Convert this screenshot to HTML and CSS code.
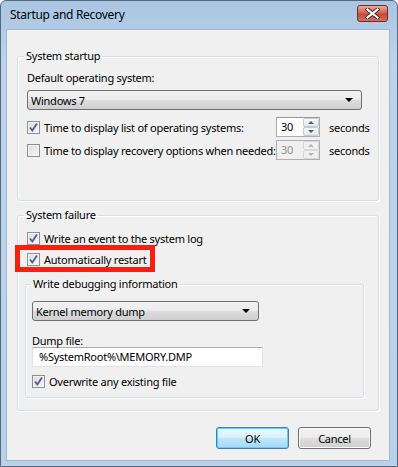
FILE: index.html
```
<!DOCTYPE html>
<html lang="en">
<head>
    <meta charset="UTF-8">
    <title>Startup and Recovery</title>
    <link rel="stylesheet" href="styles.css">
</head>
<body>
    <div class="window">
        <div class="titlebar">
            <span class="title">Startup and Recovery</span>
            <span class="close">
                <svg width="15" height="11" viewBox="0 0 15 11">
                    <path d="M2.5 1.5 L12.5 9.5 M12.5 1.5 L2.5 9.5" stroke="#4a2320" stroke-width="4" stroke-linecap="square"/>
                    <path d="M2.5 1.5 L12.5 9.5 M12.5 1.5 L2.5 9.5" stroke="#fff" stroke-width="2.2" stroke-linecap="square"/>
                </svg>
            </span>
        </div>
        <div class="content">
            <fieldset class="group startup">
                <legend>System startup</legend>
                <div class="text-line">Default operating system:</div>
                <div class="combo wide">
                    <span>Windows 7</span>
                    <span class="arrow"></span>
                </div>
                <div class="row first">
                    <div class="check-label">
                        <span class="check on"><svg width="11" height="11" viewBox="0 0 11 11"><path d="M2 5.5 L4.3 8.5 L9 1.5" fill="none" stroke="#4a5f97" stroke-width="1.8"/></svg></span>
                        <span>Time to display list of operating systems:</span>
                    </div>
                    <div class="spin">
                        <span class="spin-value">30</span>
                        <span class="spin-btns">
                            <span class="spin-btn"><span class="up"></span></span>
                            <span class="spin-btn"><span class="down"></span></span>
                        </span>
                    </div>
                    <span class="unit">seconds</span>
                </div>
                <div class="row second">
                    <div class="check-label">
                        <span class="check"></span>
                        <span>Time to display recovery options when needed:</span>
                    </div>
                    <div class="spin disabled">
                        <span class="spin-value">30</span>
                        <span class="spin-btns">
                            <span class="spin-btn"><span class="up"></span></span>
                            <span class="spin-btn"><span class="down"></span></span>
                        </span>
                    </div>
                    <span class="unit">seconds</span>
                </div>
            </fieldset>

            <fieldset class="group failure">
                <legend>System failure</legend>
                <div class="row log">
                    <span class="check on"><svg width="11" height="11" viewBox="0 0 11 11"><path d="M2 5.5 L4.3 8.5 L9 1.5" fill="none" stroke="#4a5f97" stroke-width="1.8"/></svg></span>
                    <span>Write an event to the system log</span>
                </div>
                <div class="row restart">
                    <span class="check on"><svg width="11" height="11" viewBox="0 0 11 11"><path d="M2 5.5 L4.3 8.5 L9 1.5" fill="none" stroke="#4a5f97" stroke-width="1.8"/></svg></span>
                    <span>Automatically restart</span>
                </div>
                <fieldset class="group debug">
                    <legend>Write debugging information</legend>
                    <div class="combo narrow">
                        <span>Kernel memory dump</span>
                        <span class="arrow"></span>
                    </div>
                    <div class="text-line dump-label">Dump file:</div>
                    <div class="textbox">%SystemRoot%\MEMORY.DMP</div>
                    <div class="row overwrite">
                        <span class="check on"><svg width="11" height="11" viewBox="0 0 11 11"><path d="M2 5.5 L4.3 8.5 L9 1.5" fill="none" stroke="#4a5f97" stroke-width="1.8"/></svg></span>
                        <span>Overwrite any existing file</span>
                    </div>
                </fieldset>
            </fieldset>

            <div class="buttons">
                <button type="button" class="default">OK</button>
                <button type="button">Cancel</button>
            </div>
        </div>
    </div>
</body>
</html>
```

FILE: styles.css
```
body {
    margin: 0;
    background: #fff;
    font-family: "Noto Sans", "Open Sans", sans-serif;
    font-size: 11px;
    letter-spacing: -0.25px;
    color: #000;
}
.window {
    width: 398px;
    height: 467px;
    box-sizing: border-box;
    border: 1px solid #56687e;
    border-radius: 6px 6px 0 0;
    background: linear-gradient(to bottom, #a9c5e2 0px, #bdd4ec 60px, #b9d1ea 100%);
    display: flex;
    flex-direction: column;
}
.titlebar {
    height: 28px;
    display: flex;
    align-items: center;
    justify-content: space-between;
    padding: 0 9px 2px 9px;
    box-sizing: border-box;
}
.title {
    font-size: 12px;
    letter-spacing: -0.3px;
    color: #000;
    margin-top: 1px;
}
.close {
    width: 31px;
    height: 17px;
    box-sizing: border-box;
    border: 1px solid #6e2d28;
    border-radius: 3px;
    background: linear-gradient(to bottom, #e9a99a 0%, #d2624f 45%, #c44a38 55%, #d2715e 100%);
    display: flex;
    align-items: center;
    justify-content: center;
    margin-top: -2px;
}
.content {
    margin: 0 7px 5px 5px;
    flex: 1;
    background: #f0f0f0;
    border: 1px solid #a3b8cf;
    padding: 0 10px 0 10px;
}
.group {
    border: 1px solid #d5dfe5;
    border-radius: 3px;
    margin: 0;
    min-width: 0;
    padding: 0 16px 0 9px;
    box-shadow: inset 1px 1px 0 #fff, 1px 1px 0 #fff;
}
.group legend {
    padding: 0 2px;
    margin-left: -3px;
    line-height: 16px;
    color: #000;
}
.startup {
    margin-top: 18px;
    padding-top: 6px;
    padding-bottom: 40px;
}
.failure {
    margin-top: 6px;
    padding-top: 5px;
    padding-bottom: 12px;
}
.debug {
    margin: 7px -2px 0 -2px;
    padding: 9px 10px 6px 6px;
}
.debug legend {
    margin-left: -1px;
}
.text-line {
    line-height: 16px;
}
.combo {
    height: 20px;
    box-sizing: border-box;
    border: 1px solid #707070;
    border-radius: 3px;
    background: linear-gradient(to bottom, #f2f2f2 0%, #ebebeb 50%, #dddddd 51%, #cfcfcf 100%);
    display: flex;
    align-items: center;
    justify-content: space-between;
    padding: 0 8px 0 3px;
    margin-top: 4px;
}
.combo.narrow {
    width: 227px;
    margin-top: 0;
}
.arrow {
    width: 0;
    height: 0;
    border-left: 4px solid transparent;
    border-right: 4px solid transparent;
    border-top: 4px solid #000;
}
.row {
    display: flex;
    align-items: center;
    height: 20px;
}
.row.first {
    margin-top: 7px;
    margin-right: -8px;
}
.row.second {
    margin-top: 3px;
    margin-right: -8px;
}
.row.restart {
    margin-top: 1px;
    position: relative;
}
.row.restart::after {
    content: "";
    position: absolute;
    left: -12px;
    top: -4px;
    width: 140px;
    height: 27px;
    box-sizing: border-box;
    border: 5px solid #f5200f;
}
.row.overwrite {
    margin-top: 4px;
}
.check-label {
    flex: 0 0 249px;
    display: flex;
    align-items: center;
}
.check {
    width: 13px;
    height: 13px;
    box-sizing: border-box;
    border: 1px solid #8e8f8f;
    background: linear-gradient(135deg, #dcdcdc 0%, #f6f6f6 100%);
    box-shadow: inset 0 0 0 1px #f4f4f4;
    margin-right: 4px;
    display: flex;
    align-items: center;
    justify-content: center;
    flex: 0 0 auto;
}
.spin {
    width: 44px;
    height: 20px;
    box-sizing: border-box;
    border: 1px solid #abadb3;
    border-top-color: #8f9aa5;
    background: #fff;
    display: flex;
}
.spin-value {
    flex: 1;
    padding-left: 4px;
    line-height: 18px;
}
.spin-btns {
    width: 16px;
    display: flex;
    flex-direction: column;
}
.spin-btn {
    flex: 1;
    border: 1px solid #c5cbd2;
    border-radius: 2px;
    background: linear-gradient(to bottom, #f7f7f7, #e4e7eb);
    display: flex;
    align-items: center;
    justify-content: center;
}
.up, .down {
    width: 0;
    height: 0;
    border-left: 3px solid transparent;
    border-right: 3px solid transparent;
}
.up {
    border-bottom: 3px solid #4b5e86;
}
.down {
    border-top: 3px solid #4b5e86;
}
.spin.disabled {
    background: #f0f0f0;
    border-color: #afafaf;
    color: #8d8d8d;
}
.spin.disabled .spin-btn {
    background: #f0f0f0;
    border-color: #d8d8d8;
}
.spin.disabled .up {
    border-bottom-color: #b5b5b5;
}
.spin.disabled .down {
    border-top-color: #b5b5b5;
}
.unit {
    margin-left: 9px;
}
.dump-label {
    margin-top: 13px;
    line-height: 14px;
}
.textbox {
    width: 231px;
    height: 20px;
    box-sizing: border-box;
    border: 1px solid #e2e3ea;
    border-top-color: #abadb3;
    background: #fff;
    line-height: 18px;
    padding-left: 6px;
    margin-top: -1px;
}
.buttons {
    display: flex;
    justify-content: flex-end;
    gap: 9px;
    margin-top: 16px;
    padding-right: 8px;
}
button {
    width: 73px;
    height: 22px;
    font-family: "Noto Sans", "Open Sans", sans-serif;
    font-size: 11px;
    letter-spacing: -0.25px;
    color: #000;
    border: 1px solid #707070;
    border-radius: 3px;
    background: linear-gradient(to bottom, #f2f2f2 0%, #ebebeb 50%, #dddddd 51%, #cfcfcf 100%);
    box-shadow: inset 0 0 0 1px #fcfcfc;
    padding: 0;
}
button.default {
    border-color: #3c7fb1;
    background: linear-gradient(to bottom, #eaf6fd 0%, #d9f0fc 50%, #bee6fd 51%, #a7d9f5 100%);
    box-shadow: inset 0 0 0 1px #5fd0ff;
}
```
